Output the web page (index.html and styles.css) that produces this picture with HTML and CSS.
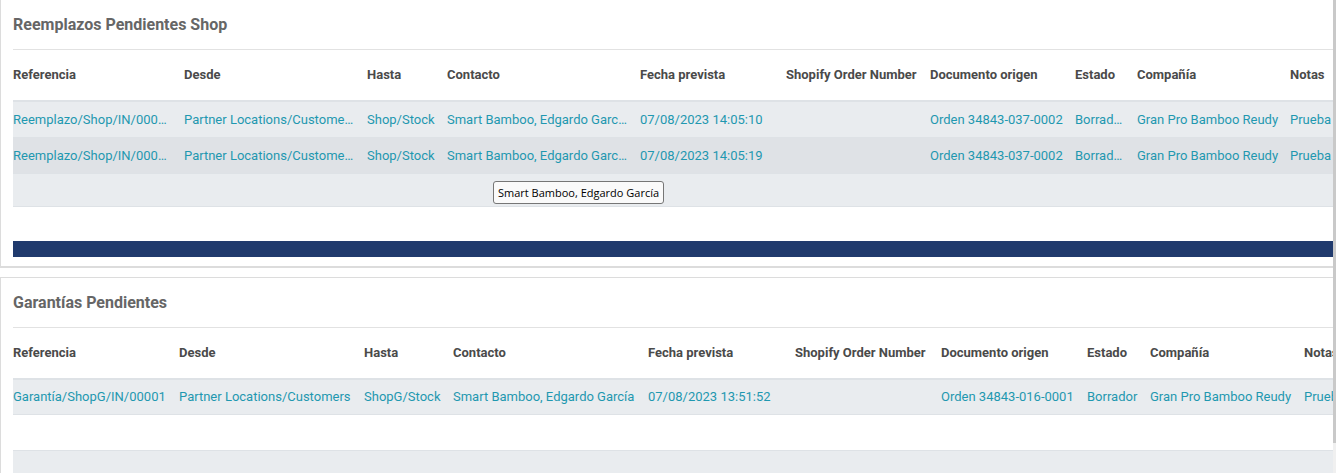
FILE: index.html
```html
<!DOCTYPE html>
<html lang="es">
<head>
<meta charset="utf-8">
<title>Pendientes</title>
<link rel="stylesheet" href="styles.css">
</head>
<body>
<div class="page">
  <section class="panel panel--first">
    <h2 class="panel-title">Reemplazos Pendientes Shop</h2>
    <table class="list list--repl">
      <thead>
        <tr>
          <th>Referencia</th><th>Desde</th><th>Hasta</th><th>Contacto</th><th>Fecha prevista</th><th>Shopify Order Number</th><th>Documento origen</th><th>Estado</th><th>Compañía</th><th>Notas</th>
        </tr>
      </thead>
      <tbody>
        <tr class="row row--odd">
          <td>Reemplazo/Shop/IN/00002</td><td>Partner Locations/Customers</td><td>Shop/Stock</td><td>Smart Bamboo, Edgardo García</td><td>07/08/2023 14:05:10</td><td></td><td>Orden 34843-037-0002</td><td>Borrador</td><td>Gran Pro Bamboo Reudy</td><td>Prueba</td>
        </tr>
        <tr class="row row--hover">
          <td>Reemplazo/Shop/IN/00001</td><td>Partner Locations/Customers</td><td>Shop/Stock</td><td>Smart Bamboo, Edgardo García</td><td>07/08/2023 14:05:19</td><td></td><td>Orden 34843-037-0002</td><td>Borrador</td><td>Gran Pro Bamboo Reudy</td><td>Prueba</td>
        </tr>
        <tr class="row row--odd row--short">
          <td></td><td></td><td></td><td></td><td></td><td></td><td></td><td></td><td></td><td></td>
        </tr>
      </tbody>
    </table>
    <div class="pager-bar"></div>
    <div class="tooltip">Smart Bamboo, Edgardo García</div>
  </section>

  <section class="panel">
    <h2 class="panel-title">Garantías Pendientes</h2>
    <table class="list list--warr">
      <thead>
        <tr>
          <th>Referencia</th><th>Desde</th><th>Hasta</th><th>Contacto</th><th>Fecha prevista</th><th>Shopify Order Number</th><th>Documento origen</th><th>Estado</th><th>Compañía</th><th>Notas</th>
        </tr>
      </thead>
      <tbody>
        <tr class="row row--odd">
          <td>Garantía/ShopG/IN/00001</td><td>Partner Locations/Customers</td><td>ShopG/Stock</td><td>Smart Bamboo, Edgardo García</td><td>07/08/2023 13:51:52</td><td></td><td>Orden 34843-016-0001</td><td>Borrador</td><td>Gran Pro Bamboo Reudy</td><td>Prueba</td>
        </tr>
        <tr class="row row--even">
          <td></td><td></td><td></td><td></td><td></td><td></td><td></td><td></td><td></td><td></td>
        </tr>
        <tr class="row row--odd">
          <td></td><td></td><td></td><td></td><td></td><td></td><td></td><td></td><td></td><td></td>
        </tr>
      </tbody>
    </table>
  </section>
</div>
<div class="scrollbar"><div class="scrollbar-thumb"></div></div>
</body>
</html>
```

FILE: styles.css
```css
html, body {
  margin: 0;
  padding: 0;
  background: #ffffff;
  overflow: hidden;
  height: 100%;
}

.page {
  width: 1420px;
  font-family: Roboto, "Liberation Sans", Arial, sans-serif;
}

.panel {
  position: relative;
  border: 1px solid #dcdcdc;
  border-right: none;
  margin-top: 9px;
  padding: 0 0 0 12px;
  background: #fff;
}

.panel--first {
  border-top: none;
  margin-top: 0;
  border-bottom-width: 2px;
  padding-bottom: 9px;
}

.panel-title {
  margin: 0;
  padding: 15px 0 14px;
  line-height: 20px;
  font-size: 16px;
  font-weight: 700;
  color: #666666;
  border-bottom: 1px solid #e2e2e2;
}

.list {
  border-collapse: collapse;
  table-layout: fixed;
  width: 1408px;
  font-size: 13px;
}

.list th,
.list td {
  box-sizing: border-box;
  padding: 0 10px 0 0;
  white-space: nowrap;
  overflow: hidden;
  text-overflow: ellipsis;
  text-align: left;
  vertical-align: middle;
}

.list th {
  height: 51px;
  padding-bottom: 1px;
  font-weight: 700;
  color: #4a4a4a;
  border-bottom: 2px solid #dee2e6;
}

.list td {
  height: 36px;
  color: #1f98b0;
}

.row {
  border-bottom: 1px solid #dee2e6;
}

.row--odd { background: #e9ecef; }
.row--even { background: #ffffff; }
.row--hover { background: #dfe2e6; }

.row--short td { height: 33px; }

/* column widths: first table */
.list--repl th:nth-child(1) { width: 171px; }
.list--repl th:nth-child(2) { width: 183px; }
.list--repl th:nth-child(3) { width: 80px; }
.list--repl th:nth-child(4) { width: 193px; }
.list--repl th:nth-child(5) { width: 146px; }
.list--repl th:nth-child(6) { width: 144px; padding-right: 13px; }
.list--repl th:nth-child(7) { width: 145px; }
.list--repl th:nth-child(8) { width: 62px; }
.list--repl th:nth-child(9) { width: 153px; }

/* cells clipped by their column in the first table */
.list--repl td:nth-child(1),
.list--repl td:nth-child(8) { padding-right: 14px; }
.list--repl td:nth-child(2) { padding-right: 12px; }
.list--repl td:nth-child(4) { padding-right: 13px; }

/* column widths: second table */
.list--warr th:nth-child(1) { width: 166px; }
.list--warr th:nth-child(2) { width: 185px; }
.list--warr th:nth-child(3) { width: 89px; }
.list--warr th:nth-child(4) { width: 195px; }
.list--warr th:nth-child(5) { width: 147px; }
.list--warr th:nth-child(6) { width: 146px; }
.list--warr th:nth-child(7) { width: 146px; }
.list--warr th:nth-child(8) { width: 63px; }
.list--warr th:nth-child(9) { width: 154px; }

.pager-bar {
  margin-top: 34px;
  height: 16px;
  background: #203a6d;
}

.tooltip {
  position: absolute;
  left: 492px;
  top: 181px;
  height: 21px;
  padding: 0 4px;
  line-height: 21px;
  border: 1px solid #767676;
  border-radius: 3px;
  background: #fafafa;
  color: #000;
  font-family: "Open Sans", "Liberation Sans", Arial, sans-serif;
  font-size: 11px;
  white-space: nowrap;
}

.scrollbar {
  position: fixed;
  top: 0;
  right: 0;
  width: 3px;
  height: 100%;
  background: #f0f0f0;
}

.scrollbar-thumb {
  height: 443px;
  background: #c9c9c9;
}
```
